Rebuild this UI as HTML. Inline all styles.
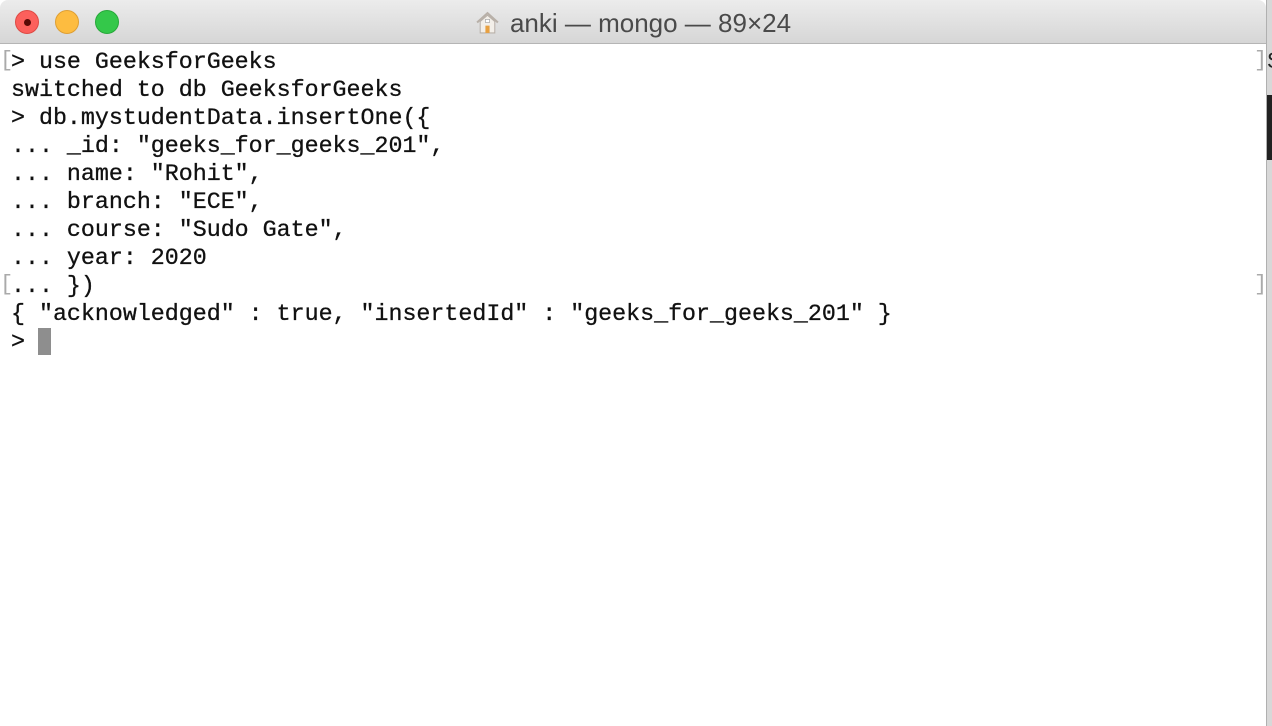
<!DOCTYPE html>
<html><head><style>
body{margin:0;width:1272px;height:726px;overflow:hidden;background:#fff;position:relative;font-family:"Liberation Sans",sans-serif}
.tb{position:absolute;left:0;top:0;width:1266px;height:43px;background:linear-gradient(#ececec,#d6d6d6);border-bottom:1px solid #b5b5b5;border-top-right-radius:8px;border-top-left-radius:8px}
.d{position:absolute;top:10px;width:24px;height:24px;border-radius:50%;box-sizing:border-box}
.title{position:absolute;left:0;width:1266px;top:8px;text-align:center;font-size:26px;color:#4a4a4a}
.term{position:absolute;left:11px;top:48px;font-family:"Liberation Mono",monospace;font-size:23.3px;line-height:28px;color:#111;white-space:pre;margin:0;-webkit-text-stroke:0.3px #111}
.rs{position:absolute;left:1266px;top:0;width:6px;height:726px;background:#d8d8d8;border-left:1px solid #b0b0b0}
.br{position:absolute;color:#aaa;font-family:"Liberation Mono",monospace;font-size:22px}
</style></head><body>
<div class="tb">
<div class="d" style="left:15px;background:#fc605c;border:1px solid #de4a44"><div style="position:absolute;left:8px;top:8px;width:7px;height:7px;border-radius:50%;background:#5a0a06"></div></div>
<div class="d" style="left:55px;background:#fdbc40;border:1px solid #de9f33"></div>
<div class="d" style="left:95px;background:#34c84a;border:1px solid #27a83a"></div>
<div class="title"><svg width="25" height="25" viewBox="0 0 24 24" style="vertical-align:-3px;margin-right:10px"><path d="M2 12 L12 3 L22 12" fill="none" stroke="#b8b0a8" stroke-width="2"/><path d="M5 11 V22 H19 V11 L12 5Z" fill="#f3efe9" stroke="#b8b0a8"/><rect x="10" y="15" width="4" height="7" fill="#e8a040"/><rect x="10" y="9" width="4" height="3" fill="#fff" stroke="#aaa" stroke-width=".7"/></svg>anki — mongo — 89×24</div>
</div>
<div class="rs"><div style="position:absolute;top:95px;left:0;width:6px;height:65px;background:#222"></div><div style="position:absolute;top:48px;left:0;font-size:22px;color:#222">S</div></div>
<div class="br" style="left:0;top:48px">[</div>
<div class="br" style="left:0;top:272px">[</div>
<div class="br" style="left:1254px;top:48px">]</div>
<div class="br" style="left:1254px;top:272px">]</div>
<pre class="term">&gt; use GeeksforGeeks
switched to db GeeksforGeeks
&gt; db.mystudentData.insertOne({
... _id: "geeks_for_geeks_201",
... name: "Rohit",
... branch: "ECE",
... course: "Sudo Gate",
... year: 2020
... })
{ "acknowledged" : true, "insertedId" : "geeks_for_geeks_201" }
&gt; </pre>
<div style="position:absolute;left:38px;top:328px;width:13px;height:27px;background:#8e8e8e"></div>
</body></html>
